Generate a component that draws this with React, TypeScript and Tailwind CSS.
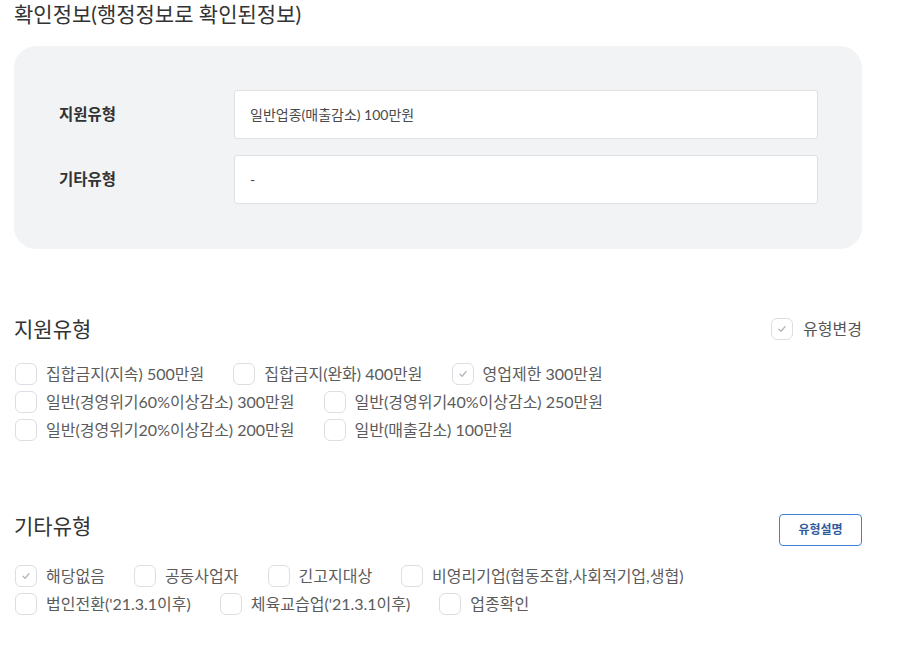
import React from "react";

const FONT = { fontFamily: "Lato, 'Noto Sans CJK KR', 'Noto Sans', sans-serif" };

function Box({ checked = false }: { checked?: boolean }) {
  return (
    <span className="flex h-[22px] w-[22px] shrink-0 items-center justify-center rounded-[6px] border border-[#dcdee4] bg-white">
      {checked && (
        <svg width="10" height="10" viewBox="0 0 10 10" fill="none">
          <path d="M2 5.2 L4.1 7.2 L8 2.8" stroke="#b4b6bb" strokeWidth="1.3" strokeLinecap="round" strokeLinejoin="round" />
        </svg>
      )}
    </span>
  );
}

function Check({ label, checked = false }: { label: string; checked?: boolean }) {
  return (
    <label className="flex items-center gap-[9px] text-[16px] text-[#5b5b5b] leading-[22px]">
      <Box checked={checked} />
      <span>{label}</span>
    </label>
  );
}

function Row({ items }: { items: { label: string; checked?: boolean }[] }) {
  return (
    <div className="flex h-[28px] items-center gap-x-[29px]">
      {items.map((it) => (
        <Check key={it.label} label={it.label} checked={it.checked} />
      ))}
    </div>
  );
}

export default function App() {
  return (
    <div className="min-h-[657px] w-[900px] bg-white" style={FONT}>
      <div className="ml-[14px] w-[848px]">
        <h1 className="h-[28px] text-[21px] leading-[28px] font-normal text-[#333]">
          확인정보(행정정보로 확인된정보)
        </h1>

        <div className="mt-[18px] flex flex-col gap-[16px] rounded-[22px] bg-[#f2f3f5] pt-[44px] pb-[45px] pl-[45px] pr-[44px]">
          <div className="flex items-center">
            <div className="w-[175px] text-[15.5px] font-bold text-[#333]">지원유형</div>
            <div className="flex h-[49px] flex-1 items-center rounded-[3px] border border-[#dfe0e2] bg-white pl-[15px] text-[14px] text-[#4a4a4a]">
              일반업종(매출감소) 100만원
            </div>
          </div>
          <div className="flex items-center">
            <div className="w-[175px] text-[15.5px] font-bold text-[#333]">기타유형</div>
            <div className="flex h-[49px] flex-1 items-center rounded-[3px] border border-[#dfe0e2] bg-white pl-[15px] text-[14px] text-[#4a4a4a]">
              -
            </div>
          </div>
        </div>

        <section className="mt-[66px]">
          <div className="flex h-[28px] items-center justify-between">
            <h2 className="text-[21px] leading-[28px] font-normal text-[#333]">지원유형</h2>
            <label className="flex items-center gap-[10px] text-[16px] text-[#555]">
              <Box checked />
              <span>유형변경</span>
            </label>
          </div>
          <div className="mt-[17px] pl-[1px]">
            <Row
              items={[
                { label: "집합금지(지속) 500만원" },
                { label: "집합금지(완화) 400만원" },
                { label: "영업제한 300만원", checked: true },
              ]}
            />
            <Row
              items={[
                { label: "일반(경영위기60%이상감소) 300만원" },
                { label: "일반(경영위기40%이상감소) 250만원" },
              ]}
            />
            <Row
              items={[
                { label: "일반(경영위기20%이상감소) 200만원" },
                { label: "일반(매출감소) 100만원" },
              ]}
            />
          </div>
        </section>

        <section className="mt-[68px]">
          <div className="flex items-start justify-between">
            <h2 className="text-[21px] leading-[28px] font-normal text-[#333]">기타유형</h2>
            <button className="mt-[2px] flex h-[32px] w-[83px] items-center justify-center rounded-[4px] border border-[#3d82d8] bg-white text-[12px] font-bold text-[#2f5c9e]">
              유형설명
            </button>
          </div>
          <div className="mt-[16px] pl-[1px]">
            <Row
              items={[
                { label: "해당없음", checked: true },
                { label: "공동사업자" },
                { label: "긴고지대상" },
                { label: "비영리기업(협동조합,사회적기업,생협)" },
              ]}
            />
            <Row
              items={[
                { label: "법인전환('21.3.1이후)" },
                { label: "체육교습업('21.3.1이후)" },
                { label: "업종확인" },
              ]}
            />
          </div>
        </section>
      </div>
    </div>
  );
}
